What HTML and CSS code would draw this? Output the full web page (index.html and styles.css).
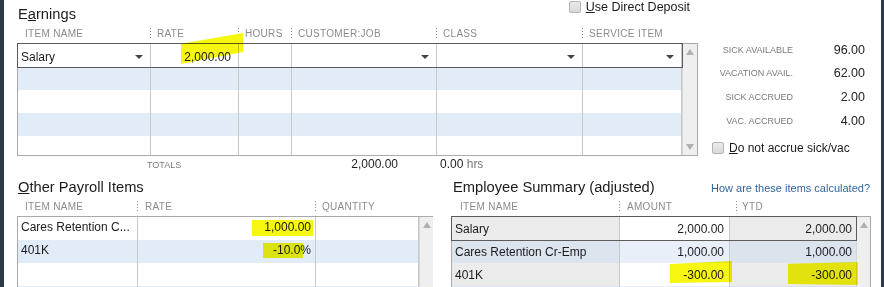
FILE: index.html
```html
<!DOCTYPE html>
<html>
<head>
<meta charset="utf-8">
<title>Payroll</title>
<link rel="stylesheet" href="styles.css">
</head>
<body>
<div class="screen">
  <div class="top">
    <section class="earnings">
      <div class="title-row">
        <h2 class="title">E<u>a</u>rnings</h2>
        <label class="check deposit"><span class="box"></span><span><u>U</u>se Direct Deposit</span></label>
      </div>
      <div class="head earn-cols">
        <span class="h first">ITEM NAME</span>
        <span class="h">RATE</span>
        <span class="h">HOURS</span>
        <span class="h">CUSTOMER:JOB</span>
        <span class="h">CLASS</span>
        <span class="h">SERVICE ITEM</span>
      </div>
      <div class="frame earn-frame">
        <div class="rows">
          <div class="row earn-cols sel">
            <div class="c dd">Salary</div>
            <div class="c num e-rate"><span class="hl hl-earn"></span>2,000.00</div>
            <div class="c"></div>
            <div class="c dd"></div>
            <div class="c dd"></div>
            <div class="c dd"></div>
          </div>
          <div class="row earn-cols blue"><div class="c"></div><div class="c"></div><div class="c"></div><div class="c"></div><div class="c"></div><div class="c"></div></div>
          <div class="row earn-cols"><div class="c"></div><div class="c"></div><div class="c"></div><div class="c"></div><div class="c"></div><div class="c"></div></div>
          <div class="row earn-cols blue"><div class="c"></div><div class="c"></div><div class="c"></div><div class="c"></div><div class="c"></div><div class="c"></div></div>
          <div class="row earn-cols short"><div class="c"></div><div class="c"></div><div class="c"></div><div class="c"></div><div class="c"></div><div class="c"></div></div>
        </div>
        <div class="scroll"><span class="up"></span><span class="down"></span></div>
      </div>
      <div class="totals">
        <div class="tot-box"><span class="tot-label">TOTALS</span><span>2,000.00</span></div>
        <span class="hours">0.00 <span class="unit">hrs</span></span>
      </div>
    </section>
    <aside class="accrual">
      <div class="acc-grid">
        <span class="acc-label">SICK AVAILABLE</span><span class="acc-val">96.00</span>
        <span class="acc-label">VACATION AVAIL.</span><span class="acc-val">62.00</span>
        <span class="acc-label">SICK ACCRUED</span><span class="acc-val">2.00</span>
        <span class="acc-label">VAC. ACCRUED</span><span class="acc-val">4.00</span>
      </div>
      <label class="check noaccrue"><span class="box"></span><span><u>D</u>o not accrue sick/vac</span></label>
    </aside>
  </div>
  <div class="bottom">
    <section class="other">
      <h2 class="title"><u>O</u>ther Payroll Items</h2>
      <div class="head other-cols">
        <span class="h first">ITEM NAME</span>
        <span class="h p7">RATE</span>
        <span class="h">QUANTITY</span>
      </div>
      <div class="frame low">
        <div class="rows">
          <div class="row other-cols lift">
            <div class="c">Cares Retention C...</div>
            <div class="c num o-rate"><span class="hl hl-o1"></span>1,000.00</div>
            <div class="c"></div>
          </div>
          <div class="row other-cols blue lift">
            <div class="c">401K</div>
            <div class="c num o-rate"><span class="hl hl-o2"></span>-10.0%</div>
            <div class="c"></div>
          </div>
          <div class="row other-cols"><div class="c"></div><div class="c"></div><div class="c"></div></div>
          <div class="row other-cols blue"><div class="c"></div><div class="c"></div><div class="c"></div></div>
        </div>
        <div class="scroll sm"><span class="up"></span></div>
      </div>
    </section>
    <section class="summary">
      <div class="sum-title-row">
        <h2 class="title">Employee Summary (adjusted)</h2>
        <span class="link">How are these items calculated?</span>
      </div>
      <div class="head sum-cols">
        <span class="h first p8">ITEM NAME</span>
        <span class="h p7">AMOUNT</span>
        <span class="h ytd">YTD</span>
      </div>
      <div class="frame low">
        <div class="rows">
          <div class="row sum-cols sel">
            <div class="c g">Salary</div>
            <div class="c num amt">2,000.00</div>
            <div class="c num ytdc g">2,000.00</div>
          </div>
          <div class="row sum-cols">
            <div class="c bi">Cares Retention Cr-Emp</div>
            <div class="c num amt ba">1,000.00</div>
            <div class="c num ytdc by">1,000.00</div>
          </div>
          <div class="row sum-cols">
            <div class="c g">401K</div>
            <div class="c num amt"><span class="hl hl-s1"></span>-300.00</div>
            <div class="c num ytdc g"><span class="hl hl-s2"></span>-300.00</div>
          </div>
          <div class="row sum-cols">
            <div class="c bi"></div>
            <div class="c num amt ba"></div>
            <div class="c num ytdc by"></div>
          </div>
        </div>
        <div class="scroll sm"><span class="up"></span></div>
      </div>
    </section>
  </div>
</div>
</body>
</html>
```

FILE: styles.css
```css
* { box-sizing: border-box; margin: 0; padding: 0; }
body { margin: 0; font-family: "Liberation Sans", Arial, sans-serif; color: #1e1e1e; background: #fff; }
u { text-decoration: underline; text-underline-offset: 1px; }

.screen {
  width: 884px; height: 287px; overflow: hidden;
  border-left: 4px solid #2b3a4b; border-right: 3px solid #2b3a4b;
  padding-left: 13px; background: #fff;
}
.top { display: flex; align-items: flex-start; }
.earnings { width: 681px; flex: none; }
.title-row { display: flex; justify-content: space-between; align-items: flex-start; height: 23px; }
.title { font-size: 14.7px; line-height: 17px; font-weight: normal; color: #1b1b1b; margin-left: 1px; white-space: nowrap; }
.title-row .title { margin-top: 6px; }

.check { display: flex; align-items: center; gap: 5px; font-size: 12.5px; line-height: 14px; color: #1b1b1b; white-space: nowrap; }
.deposit { margin-right: 8px; }
.box { width: 12px; height: 12px; flex: none; border: 1px solid #b3b3b3; border-radius: 2px; background: linear-gradient(#ebebeb, #d8d8d8); }

.head { display: grid; height: 14px; line-height: 14px; font-size: 10px; letter-spacing: .3px; color: #8b8b8b; padding-left: 1px; margin-top: 4px; white-space: nowrap; }
.h { position: relative; padding-left: 6px; }
.h.first { padding-left: 7px; }
.h.p7 { padding-left: 7px; }
.h.p8 { padding-left: 8px; }
.h:not(.first)::before {
  content: ""; position: absolute; left: -1px; top: 1px; width: 1px; height: 10px;
  background: repeating-linear-gradient(#8f8f8f 0 1px, transparent 1px 3px);
}
.h.ytd { padding-left: 12px; }
.h.ytd::before { left: 6px; }

.earn-cols { grid-template-columns: 133px 88px 53px 145px 146px 99px; }
.other-cols { grid-template-columns: 120px 178px 103px; }
.sum-cols { grid-template-columns: 168px 110px 126px; }

.frame { display: flex; border: 1px solid #a9a9a9; margin-top: 2px; }
.earn-frame { height: 113px; }
.frame.low { height: 120px; }
.rows { flex: 1; }
.row { display: grid; height: 23px; position: relative; font-size: 12px; color: #1b1b1b; background: #fff; }
.row.blue { background: #e2ecf9; }
.row.short { height: 19px; }
.row.sel { outline: 1px solid #5b5b5b; z-index: 1; }
.row.sel.earn-cols .c { padding-top: 3px; }
.row.lift .c { padding-bottom: 3px; }

.c { border-right: 1px solid #c8c8c8; display: flex; align-items: center; padding: 0 3px; position: relative; white-space: nowrap; }
.num { justify-content: flex-end; }
.dd { padding-right: 7px; }
.dd::after { content: ""; margin-left: auto; border-left: 4px solid transparent; border-right: 4px solid transparent; border-top: 4px solid #444; }
.e-rate { padding-right: 7px; }
.o-rate { padding-right: 4px; }
.amt { padding-right: 5px; }
.ytdc { padding-right: 4px; border-right: none; }

.g { background: #ebebeb; }
.bi { background: #dce4ee; }
.ba { background: #e8eff9; }
.by { background: #dbe3ed; }

.scroll { width: 15px; flex: none; background: #efefef; border-left: 1px solid #d6d6d6; display: flex; flex-direction: column; justify-content: space-between; align-items: center; padding: 5px 0; }
.scroll.sm { width: 14px; justify-content: flex-start; }
.up { width: 0; height: 0; border-left: 4.5px solid transparent; border-right: 4.5px solid transparent; border-bottom: 6px solid #b0b0b0; }
.down { width: 0; height: 0; border-left: 4.5px solid transparent; border-right: 4.5px solid transparent; border-top: 6px solid #b0b0b0; }

.hl { position: absolute; background: #f6f610; mix-blend-mode: multiply; z-index: 2; }
.hl-earn { left: 30px; top: -11px; width: 62px; height: 31px; clip-path: polygon(0 35%, 100% 0, 100% 61%, 0 100%); }
.hl-o1 { right: 2px; top: 3px; width: 61px; height: 16px; }
.hl-o2 { right: 12px; top: 3px; width: 40px; height: 15px; }
.hl-s1 { right: -3px; top: -2px; width: 62px; height: 22px; clip-path: polygon(0 14%, 100% 0, 100% 96%, 0 100%); }
.hl-s2 { right: -2px; top: -1px; width: 70px; height: 23px; clip-path: polygon(0 8%, 100% 0, 100% 100%, 0 96%); }

.totals { display: flex; align-items: baseline; padding-left: 130px; margin-top: 1px; height: 15px; line-height: 15px; font-size: 12px; color: #1e1e1e; }
.tot-box { width: 251px; display: flex; justify-content: space-between; align-items: baseline; }
.tot-label { font-size: 9px; color: #7a7a7a; }
.hours { margin-left: 42px; }
.unit { color: #777; }

.accrual { margin-left: 14px; padding-top: 38px; width: 169px; flex: none; }
.acc-grid { display: grid; grid-template-columns: 81px 72px; grid-auto-rows: 23.6px; align-items: center; }
.acc-label { text-align: right; font-size: 9px; color: #7a7a7a; white-space: nowrap; }
.acc-val { text-align: right; font-size: 12.5px; color: #222; }
.noaccrue { margin-top: 9px; font-size: 12px; }

.bottom { display: flex; gap: 18px; padding-top: 7px; }
.other { width: 416px; flex: none; }
.summary { width: 420px; flex: none; }
.sum-title-row { display: flex; justify-content: space-between; align-items: baseline; }
.summary .title { margin-left: 2px; }
.link { font-size: 11px; color: #2f66a0; margin-right: 1px; white-space: nowrap; }
```
